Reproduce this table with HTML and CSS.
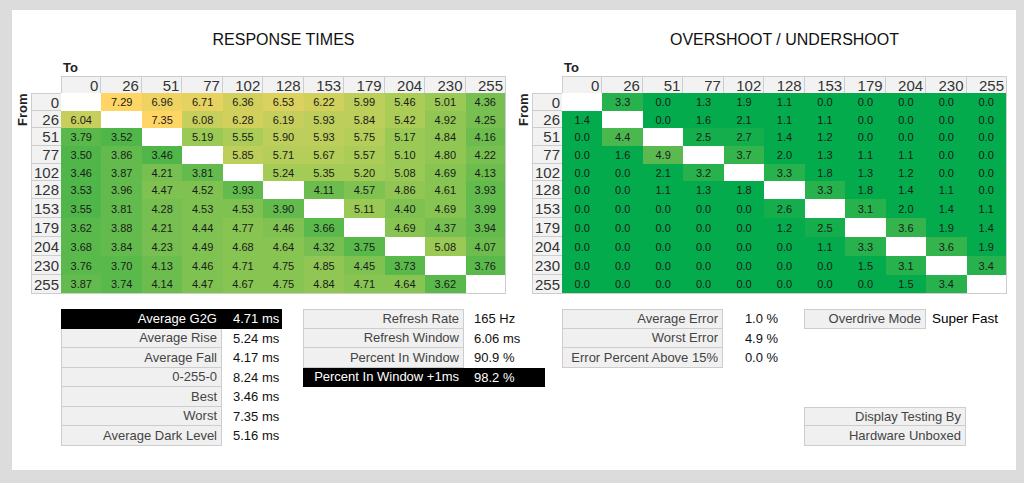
FILE: index.html
```html
<!DOCTYPE html>
<html>
<head>
<meta charset="utf-8">
<link rel="stylesheet" href="styles.css">
</head>
<body>
<div class="panel">
  <div class="charts">
    <section class="chart">
      <h2 class="title">RESPONSE TIMES</h2>
      <div class="to">To</div>
      <div class="hm-wrap">
        <div class="from">From</div>
        <div class="heat">
          <div class="corner"></div>
          <div class="ch">0</div><div class="ch">26</div><div class="ch">51</div><div class="ch">77</div><div class="ch">102</div><div class="ch">128</div><div class="ch">153</div><div class="ch">179</div><div class="ch">204</div><div class="ch">230</div><div class="ch">255</div>
          <div class="rh">0</div><div class="c d"></div><div class="c h72">7.29</div><div class="c h68">6.96</div><div class="c h66">6.71</div><div class="c h62">6.36</div><div class="c h64">6.53</div><div class="c h62">6.22</div><div class="c h58">5.99</div><div class="c h54">5.46</div><div class="c h50">5.01</div><div class="c h42">4.36</div>
          <div class="rh">26</div><div class="c h60">6.04</div><div class="c d"></div><div class="c h72">7.35</div><div class="c h60">6.08</div><div class="c h62">6.28</div><div class="c h60">6.19</div><div class="c h58">5.93</div><div class="c h58">5.84</div><div class="c h54">5.42</div><div class="c h48">4.92</div><div class="c h42">4.25</div>
          <div class="rh">51</div><div class="c h36">3.79</div><div class="c h34">3.52</div><div class="c d"></div><div class="c h50">5.19</div><div class="c h54">5.55</div><div class="c h58">5.90</div><div class="c h58">5.93</div><div class="c h56">5.75</div><div class="c h50">5.17</div><div class="c h48">4.84</div><div class="c h40">4.16</div>
          <div class="rh">77</div><div class="c h34">3.50</div><div class="c h38">3.86</div><div class="c h34">3.46</div><div class="c d"></div><div class="c h58">5.85</div><div class="c h56">5.71</div><div class="c h56">5.67</div><div class="c h54">5.57</div><div class="c h50">5.10</div><div class="c h48">4.80</div><div class="c h42">4.22</div>
          <div class="rh">102</div><div class="c h34">3.46</div><div class="c h38">3.87</div><div class="c h42">4.21</div><div class="c h38">3.81</div><div class="c d"></div><div class="c h52">5.24</div><div class="c h52">5.35</div><div class="c h52">5.20</div><div class="c h50">5.08</div><div class="c h46">4.69</div><div class="c h40">4.13</div>
          <div class="rh">128</div><div class="c h34">3.53</div><div class="c h38">3.96</div><div class="c h44">4.47</div><div class="c h44">4.52</div><div class="c h38">3.93</div><div class="c d"></div><div class="c h40">4.11</div><div class="c h44">4.57</div><div class="c h48">4.86</div><div class="c h46">4.61</div><div class="c h38">3.93</div>
          <div class="rh">153</div><div class="c h34">3.55</div><div class="c h38">3.81</div><div class="c h42">4.28</div><div class="c h44">4.53</div><div class="c h44">4.53</div><div class="c h38">3.90</div><div class="c d"></div><div class="c h50">5.11</div><div class="c h44">4.40</div><div class="c h46">4.69</div><div class="c h38">3.99</div>
          <div class="rh">179</div><div class="c h36">3.62</div><div class="c h38">3.88</div><div class="c h42">4.21</div><div class="c h44">4.44</div><div class="c h46">4.77</div><div class="c h44">4.46</div><div class="c h36">3.66</div><div class="c d"></div><div class="c h46">4.69</div><div class="c h42">4.37</div><div class="c h38">3.94</div>
          <div class="rh">204</div><div class="c h36">3.68</div><div class="c h38">3.84</div><div class="c h42">4.23</div><div class="c h44">4.49</div><div class="c h46">4.68</div><div class="c h46">4.64</div><div class="c h42">4.32</div><div class="c h36">3.75</div><div class="c d"></div><div class="c h50">5.08</div><div class="c h40">4.07</div>
          <div class="rh">230</div><div class="c h36">3.76</div><div class="c h36">3.70</div><div class="c h40">4.13</div><div class="c h44">4.46</div><div class="c h46">4.71</div><div class="c h46">4.75</div><div class="c h48">4.85</div><div class="c h44">4.45</div><div class="c h36">3.73</div><div class="c d"></div><div class="c h36">3.76</div>
          <div class="rh">255</div><div class="c h38">3.87</div><div class="c h36">3.74</div><div class="c h40">4.14</div><div class="c h44">4.47</div><div class="c h46">4.67</div><div class="c h46">4.75</div><div class="c h48">4.84</div><div class="c h46">4.71</div><div class="c h46">4.64</div><div class="c h36">3.62</div><div class="c d"></div>
        </div>
      </div>
    </section>
    <section class="chart">
      <h2 class="title">OVERSHOOT / UNDERSHOOT</h2>
      <div class="to">To</div>
      <div class="hm-wrap">
        <div class="from">From</div>
        <div class="heat">
          <div class="corner"></div>
          <div class="ch">0</div><div class="ch">26</div><div class="ch">51</div><div class="ch">77</div><div class="ch">102</div><div class="ch">128</div><div class="ch">153</div><div class="ch">179</div><div class="ch">204</div><div class="ch">230</div><div class="ch">255</div>
          <div class="rh">0</div><div class="c d"></div><div class="c o3">3.3</div><div class="c o0">0.0</div><div class="c o0">1.3</div><div class="c o0">1.9</div><div class="c o0">1.1</div><div class="c o0">0.0</div><div class="c o0">0.0</div><div class="c o0">0.0</div><div class="c o0">0.0</div><div class="c o0">0.0</div>
          <div class="rh">26</div><div class="c o0">1.4</div><div class="c d"></div><div class="c o0">0.0</div><div class="c o0">1.6</div><div class="c o0">2.1</div><div class="c o0">1.1</div><div class="c o0">1.1</div><div class="c o0">0.0</div><div class="c o0">0.0</div><div class="c o0">0.0</div><div class="c o0">0.0</div>
          <div class="rh">51</div><div class="c o0">0.0</div><div class="c o44">4.4</div><div class="c d"></div><div class="c o25">2.5</div><div class="c o25">2.7</div><div class="c o0">1.4</div><div class="c o0">1.2</div><div class="c o0">0.0</div><div class="c o0">0.0</div><div class="c o0">0.0</div><div class="c o0">0.0</div>
          <div class="rh">77</div><div class="c o0">0.0</div><div class="c o0">1.6</div><div class="c o49">4.9</div><div class="c d"></div><div class="c o35">3.7</div><div class="c o0">2.0</div><div class="c o0">1.3</div><div class="c o0">1.1</div><div class="c o0">1.1</div><div class="c o0">0.0</div><div class="c o0">0.0</div>
          <div class="rh">102</div><div class="c o0">0.0</div><div class="c o0">0.0</div><div class="c o0">2.1</div><div class="c o3">3.2</div><div class="c d"></div><div class="c o3">3.3</div><div class="c o0">1.8</div><div class="c o0">1.3</div><div class="c o0">1.2</div><div class="c o0">0.0</div><div class="c o0">0.0</div>
          <div class="rh">128</div><div class="c o0">0.0</div><div class="c o0">0.0</div><div class="c o0">1.1</div><div class="c o0">1.3</div><div class="c o0">1.8</div><div class="c d"></div><div class="c o3">3.3</div><div class="c o0">1.8</div><div class="c o0">1.4</div><div class="c o0">1.1</div><div class="c o0">0.0</div>
          <div class="rh">153</div><div class="c o0">0.0</div><div class="c o0">0.0</div><div class="c o0">0.0</div><div class="c o0">0.0</div><div class="c o0">0.0</div><div class="c o25">2.6</div><div class="c d"></div><div class="c o3">3.1</div><div class="c o0">2.0</div><div class="c o0">1.4</div><div class="c o0">1.1</div>
          <div class="rh">179</div><div class="c o0">0.0</div><div class="c o0">0.0</div><div class="c o0">0.0</div><div class="c o0">0.0</div><div class="c o0">0.0</div><div class="c o0">1.2</div><div class="c o25">2.5</div><div class="c d"></div><div class="c o35">3.6</div><div class="c o0">1.9</div><div class="c o0">1.4</div>
          <div class="rh">204</div><div class="c o0">0.0</div><div class="c o0">0.0</div><div class="c o0">0.0</div><div class="c o0">0.0</div><div class="c o0">0.0</div><div class="c o0">0.0</div><div class="c o0">1.1</div><div class="c o3">3.3</div><div class="c d"></div><div class="c o35">3.6</div><div class="c o0">1.9</div>
          <div class="rh">230</div><div class="c o0">0.0</div><div class="c o0">0.0</div><div class="c o0">0.0</div><div class="c o0">0.0</div><div class="c o0">0.0</div><div class="c o0">0.0</div><div class="c o0">0.0</div><div class="c o0">1.5</div><div class="c o3">3.1</div><div class="c d"></div><div class="c o3">3.4</div>
          <div class="rh">255</div><div class="c o0">0.0</div><div class="c o0">0.0</div><div class="c o0">0.0</div><div class="c o0">0.0</div><div class="c o0">0.0</div><div class="c o0">0.0</div><div class="c o0">0.0</div><div class="c o0">0.0</div><div class="c o0">1.5</div><div class="c o3">3.4</div><div class="c d"></div>
        </div>
      </div>
    </section>
  </div>

  <div class="stats">
    <div class="sblock s-rt">
      <div class="lab inv">Average G2G</div><div class="val inv">4.71 ms</div>
      <div class="lab">Average Rise</div><div class="val">5.24 ms</div>
      <div class="lab">Average Fall</div><div class="val">4.17 ms</div>
      <div class="lab">0-255-0</div><div class="val">8.24 ms</div>
      <div class="lab">Best</div><div class="val">3.46 ms</div>
      <div class="lab">Worst</div><div class="val">7.35 ms</div>
      <div class="lab">Average Dark Level</div><div class="val">5.16 ms</div>
    </div>
    <div class="sblock s-rr">
      <div class="lab">Refresh Rate</div><div class="val">165 Hz</div>
      <div class="lab">Refresh Window</div><div class="val">6.06 ms</div>
      <div class="lab">Percent In Window</div><div class="val">90.9 %</div>
      <div class="lab inv">Percent In Window +1ms</div><div class="val inv">98.2 %</div>
    </div>
    <div class="sblock s-err">
      <div class="lab">Average Error</div><div class="val ctr">1.0 %</div>
      <div class="lab">Worst Error</div><div class="val ctr">4.9 %</div>
      <div class="lab">Error Percent Above 15%</div><div class="val ctr">0.0 %</div>
    </div>
    <div class="sblock s-od">
      <div class="lab od-lab">Overdrive Mode</div><div class="val ctr od-val">Super Fast</div>
      <div class="lab cred cred1">Display Testing By</div>
      <div class="lab cred cred2">Hardware Unboxed</div>
    </div>
  </div>
</div>
</body>
</html>
```
FILE: styles.css
```css
html, body {
  margin: 0;
  padding: 0;
}
body {
  width: 1024px;
  height: 483px;
  overflow: hidden;
  background: #dcdcdc;
  font-family: "Liberation Sans", Arial, sans-serif;
  color: #222;
  padding: 10px 0 0 12px;
  box-sizing: border-box;
}
.panel {
  width: 1004px;
  height: 460px;
  background: #fff;
  box-sizing: border-box;
  padding-top: 20px;
}
.charts {
  display: flex;
}
.chart {
  width: 501px;
  display: flex;
  flex-direction: column;
}
.title {
  margin: 0 0 0 49px;
  width: 445px;
  text-align: center;
  font-size: 16px;
  line-height: 20px;
  font-weight: normal;
  color: #111;
}
.to {
  margin: 10px 0 0 51px;
  font-size: 13px;
  line-height: 16px;
  font-weight: bold;
  color: #222;
}
.hm-wrap {
  display: flex;
}
.from {
  width: 19px;
  box-sizing: border-box;
  padding-right: 2px;
  writing-mode: vertical-rl;
  transform: rotate(180deg);
  font-size: 13px;
  font-weight: bold;
  color: #222;
  height: 30px;
  margin-top: 20px;
  display: flex;
  align-items: center;
  justify-content: flex-start;
  text-align: left;
  line-height: 19px;
}
.heat {
  display: grid;
  width: 475px;
  grid-template-columns: 30px repeat(11, 1fr);
  grid-template-rows: 17px 18px 17px 18px 18px 17px 18px 19px 19px 19px 19px 19px;
}
.corner {
  background: #fff;
}
.ch, .rh {
  background: #f2f2f2;
  color: #333;
  font-size: 15px;
  line-height: 1;
  display: flex;
  align-items: center;
  justify-content: flex-end;
  padding-right: 2px;
  box-sizing: border-box;
  border-color: #cdcdcd;
  border-style: solid;
  border-width: 0;
}
.ch {
  border-top-width: 1px;
  border-right-width: 1px;
}
.ch:nth-child(2) {
  border-left-width: 1px;
}
.rh {
  border-left-width: 1px;
  border-bottom-width: 1px;
}
.rh:nth-child(13) {
  border-top-width: 1px;
}
.c {
  font-size: 11px;
  color: #1a1a1a;
  display: flex;
  align-items: center;
  justify-content: center;
  box-sizing: border-box;
  border-color: #cdcdcd;
  border-style: solid;
  border-width: 0;
}
.heat > .c:nth-child(12n) {
  border-right-width: 1px;
}
.heat > .c:nth-last-child(-n+11) {
  border-bottom-width: 1px;
}
.d { background: #fff; }

/* response time colour scale (value bucket) */
.h34 { background: rgb(80,182,73); }
.h36 { background: rgb(90,185,75); }
.h38 { background: rgb(100,187,77); }
.h40 { background: rgb(109,189,78); }
.h42 { background: rgb(118,191,80); }
.h44 { background: rgb(127,194,81); }
.h46 { background: rgb(136,196,82); }
.h48 { background: rgb(145,198,84); }
.h50 { background: rgb(154,201,85); }
.h52 { background: rgb(163,203,86); }
.h54 { background: rgb(172,204,88); }
.h56 { background: rgb(181,205,89); }
.h58 { background: rgb(190,206,90); }
.h60 { background: rgb(199,207,92); }
.h62 { background: rgb(209,208,93); }
.h64 { background: rgb(219,209,95); }
.h66 { background: rgb(229,210,97); }
.h68 { background: rgb(238,211,98); }
.h70 { background: rgb(247,212,99); }
.h72 { background: rgb(255,213,101); }

/* overshoot colour scale */
.o0 { background: rgb(4,171,76); }
.o25 { background: rgb(20,174,77); }
.o3 { background: rgb(40,178,78); }
.o35 { background: rgb(53,180,78); }
.o44 { background: rgb(74,184,79); }
.o49 { background: rgb(90,186,80); }

/* stats */
.stats {
  display: flex;
  margin-top: 15px;
  padding-left: 49px;
  align-items: flex-start;
}
.sblock {
  display: grid;
  grid-auto-rows: 19.5px;
}
.s-rt { grid-template-columns: 161px 60px; }
.s-rr { grid-template-columns: 161px 81px; margin-left: 21px; }
.s-err { grid-template-columns: 161px 77px; margin-left: 17px; }
.s-od {
  grid-template-columns: 122px 40px 38px;
  grid-template-rows: repeat(7, 19.5px);
  margin-left: 4px;
}
.lab {
  background: #f0f0f0;
  border: 1px solid #cdcdcd;
  border-top: none;
  box-sizing: border-box;
  font-size: 13px;
  color: #444;
  display: flex;
  align-items: center;
  justify-content: flex-end;
  padding-right: 4px;
  white-space: nowrap;
}
.sblock > .lab:first-child {
  border-top: 1px solid #cdcdcd;
}
.val {
  font-size: 13px;
  color: #111;
  display: flex;
  align-items: center;
  padding-left: 11px;
  white-space: nowrap;
}
.s-rr .val { padding-left: 10px; }
.val.ctr {
  justify-content: center;
  padding-left: 0;
}
.inv {
  background: #000;
  color: #fff;
  border-color: #000;
}
.sblock > .lab.inv:first-child { border-top-color: #000; }
.od-lab { grid-column: 1; grid-row: 1; }
.od-val { grid-column: 2 / 4; grid-row: 1; font-size: 13.5px; color: #000; }
.cred { grid-column: 1 / 3; }
.cred1 { grid-row: 6; border-top: 1px solid #cdcdcd; }
.cred2 { grid-row: 7; }
```
